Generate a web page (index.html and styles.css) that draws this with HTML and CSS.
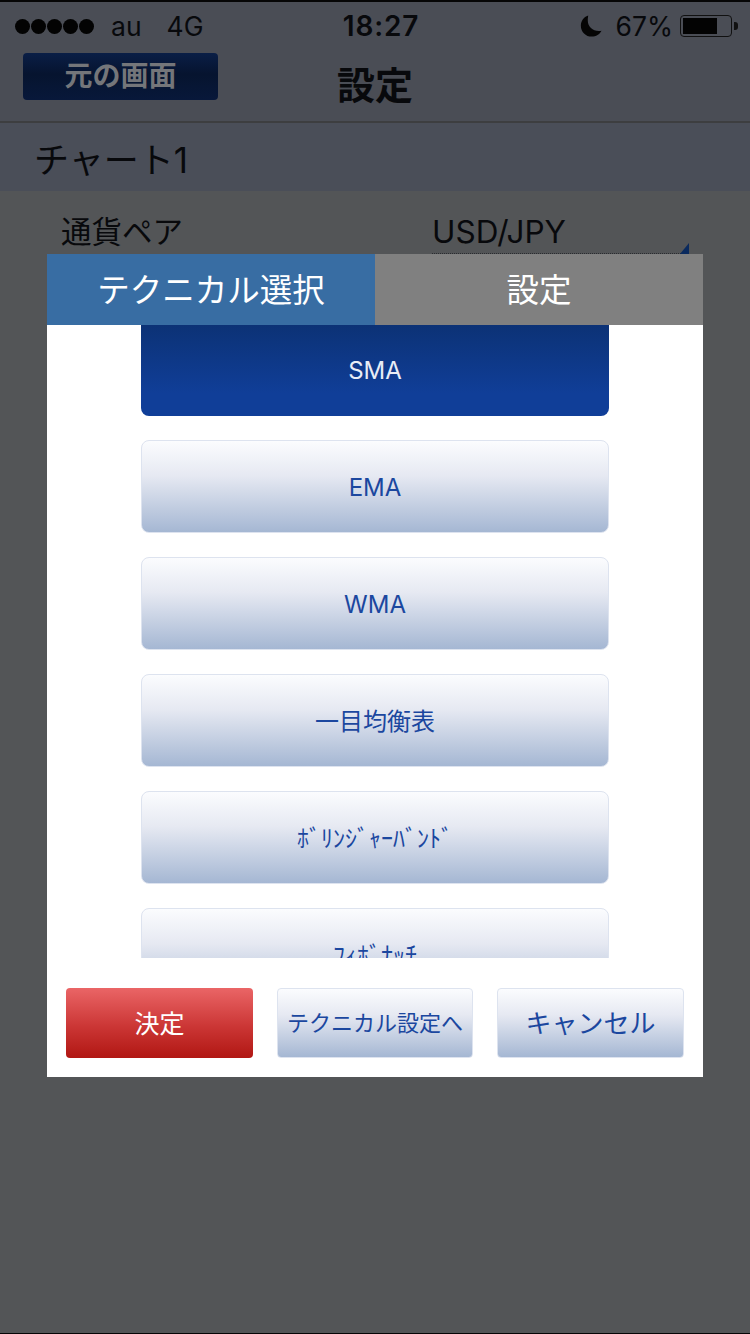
FILE: index.html
```html
<!DOCTYPE html>
<html lang="ja">
<head>
    <meta charset="UTF-8">
    <meta name="viewport" content="width=device-width, initial-scale=1.0">
    <title>設定</title>
    <link rel="stylesheet" href="styles.css">
</head>
<body>
    <!-- status bar -->
    <div class="status-bar">
        <div class="status-left">
            <div class="signal"><span></span><span></span><span></span><span></span><span></span></div>
            <span class="carrier">au</span>
            <span class="network">4G</span>
        </div>
        <div class="status-time">18:27</div>
        <div class="status-right">
            <svg class="moon" width="24" height="24" viewBox="0 0 24 26">
                <path d="M9 1.5C3.8 3.2 1 7.6 1 12.6 1 19.200 6.300 24.500 12.800 24.500c4.600 0 8.600-2.500 10.600-6.400-1 .3-2 .4-3 .4-6.600 0-11.900-5-11.900-11.400C8.500 5 8.600 3.200 9 1.500z" fill="#050505"/>
            </svg>
            <span class="battery-text">67%</span>
            <div class="battery"><div class="battery-level"></div></div>
            <div class="battery-tip"></div>
        </div>
    </div>

    <!-- nav -->
    <div class="nav-bar">
        <div class="back-button">元の画面</div>
        <div class="nav-title">設定</div>
    </div>

    <div class="section-head">チャート1</div>

    <div class="form-row">
        <div class="form-label">通貨ペア</div>
        <div class="form-value">USD/JPY</div>
    </div>

    <!-- dialog -->
    <div class="dialog">
        <div class="tabs">
            <div class="tab tab-active">テクニカル選択</div>
            <div class="tab tab-off">設定</div>
        </div>
        <div class="tech-list">
            <div class="tech-btn selected">SMA</div>
            <div class="tech-btn">EMA</div>
            <div class="tech-btn">WMA</div>
            <div class="tech-btn">一目均衡表</div>
            <div class="tech-btn">ﾎﾞﾘﾝｼﾞｬｰﾊﾞﾝﾄﾞ</div>
            <div class="tech-btn">ﾌｨﾎﾞﾅｯﾁ</div>
        </div>
        <div class="dialog-foot">
            <div class="foot-btn foot-ok">決定</div>
            <div class="foot-btn foot-mid">テクニカル設定へ</div>
            <div class="foot-btn foot-cancel">キャンセル</div>
        </div>
    </div>
</body>
</html>
```

FILE: styles.css
```css
* {
    box-sizing: border-box;
}

body {
    margin: 0;
    width: 750px;
    height: 1334px;
    position: relative;
    overflow: hidden;
    border-bottom: 1px solid #050505;
    background: #535557;
    color: #08090c;
    font-family: Inter, "Noto Sans CJK JP", sans-serif;
}

/* status bar */
.status-bar {
    height: 50px;
    display: grid;
    grid-template-columns: 1fr auto 1fr;
    align-items: center;
    border-top: 2px solid #060606;
    background: #4a4d55;
    font-size: 26.500px;
}

.status-left {
    display: flex;
    align-items: center;
    padding-left: 15px;
}

.signal {
    display: flex;
    gap: 1px;
}

.signal span {
    width: 15px;
    height: 15px;
    border-radius: 50%;
    background: #030303;
}

.carrier {
    margin-left: 17px;
}

.network {
    margin-left: 25px;
}

.status-time {
    padding-left: 12px;
    font-weight: 600;
    font-size: 28px;
    letter-spacing: 0.8px;
}

.status-right {
    display: flex;
    align-items: center;
    justify-content: flex-end;
    padding-right: 12px;
}

.moon {
    margin-right: 13px;
}

.battery-text {
    margin-right: 7px;
    font-size: 26.500px;
}

.battery {
    width: 52px;
    height: 22px;
    padding: 2px;
    border: 1px solid #111;
    border-radius: 4px;
}

.battery-level {
    width: 34px;
    height: 100%;
    background: #030303;
}

.battery-tip {
    width: 4px;
    height: 8px;
    margin-left: 2px;
    border-radius: 0 3px 3px 0;
    background: #111;
}

/* nav */
.nav-bar {
    height: 73px;
    position: relative;
    display: flex;
    justify-content: center;
    align-items: center;
    border-bottom: 2px solid #3d3e40;
    background: #4a4d55;
}

.back-button {
    position: absolute;
    left: 23px;
    top: 3px;
    width: 195px;
    height: 47px;
    border-radius: 4px;
    background: linear-gradient(#0a1e46, #06142f 45%, #08183a);
    color: #74767a;
    font-size: 28px;
    font-weight: 700;
    line-height: 46px;
    text-align: center;
}

.nav-title {
    margin-top: -6px;
    font-size: 38px;
    font-weight: 700;
}

.section-head {
    height: 68px;
    padding-left: 34px;
    background: #4a4e58;
    font-size: 35px;
    line-height: 74px;
}

.form-row {
    display: flex;
    padding: 18px 0 0 61px;
    font-size: 30.500px;
    line-height: 46px;
}

.form-label {
    width: 371px;
}

.form-value {
    width: 257px;
    height: 45px;
    position: relative;
    border-bottom: 1px dotted #2a2c30;
    font-size: 31.500px;
}

/* little corner arrow of the picker */
.form-value::after {
    content: "";
    position: absolute;
    right: 0;
    bottom: -1px;
    width: 9px;
    height: 11px;
    background: #0a2a5e;
    clip-path: polygon(100% 0, 100% 100%, 0 100%);
}

/* dialog */
.dialog {
    position: absolute;
    left: 47px;
    top: 254px;
    width: 656px;
    height: 823px;
    background: #fff;
}

.tabs {
    display: flex;
    height: 71px;
}

.tab {
    width: 50%;
    color: #fff;
    font-size: 32.500px;
    line-height: 73px;
    text-align: center;
}

.tab-active {
    background: #386da3;
}

.tab-off {
    background: #808080;
}

.tech-list {
    height: 633px;
    overflow: hidden;
    display: flex;
    flex-direction: column;
    align-items: center;
    gap: 24px;
}

.tech-btn {
    flex: none;
    width: 468px;
    height: 93px;
    border: 1px solid #dde3ef;
    border-radius: 8px;
    background: linear-gradient(#fbfcfe, #e6e9f2 38%, #a5b7d3);
    color: #1b479f;
    font-size: 24px;
    line-height: 93px;
    text-align: center;
}

.tech-btn.selected {
    height: 91px;
    border: none;
    border-radius: 0 0 8px 8px;
    background: linear-gradient(#0c3276, #103e98 75%);
    color: #e8edf6;
    line-height: 91px;
}

.dialog-foot {
    display: flex;
    gap: 24px;
    padding: 30px 19px 0;
}

.foot-btn {
    height: 70px;
    border-radius: 4px;
    text-align: center;
    white-space: nowrap;
}

.foot-ok {
    width: 187px;
    background: linear-gradient(#ea6566, #cb3635 55%, #b11713);
    color: #fff;
    font-size: 25px;
    line-height: 73px;
}

.foot-mid,
.foot-cancel {
    border: 1px solid #dde3ef;
    background: linear-gradient(#fbfcfe, #e6e9f2 38%, #a5b7d3);
    color: #1b479f;
}

.foot-mid {
    width: 196px;
    font-size: 22px;
    line-height: 68px;
}

.foot-cancel {
    width: 187px;
    font-size: 26px;
    line-height: 70px;
}
```
